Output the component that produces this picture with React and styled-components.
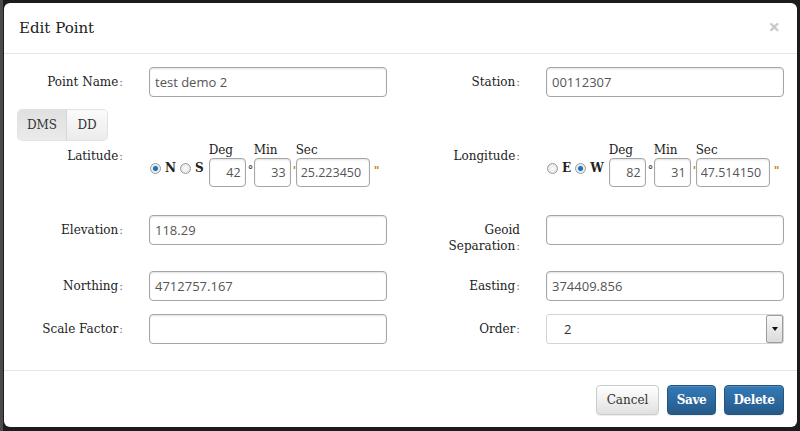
import React from 'react'
import styled, { createGlobalStyle } from 'styled-components'

const GlobalStyle = createGlobalStyle`
  html, body {
    margin: 0;
    padding: 0;
    background: #1c1c1c;
  }
  * { box-sizing: border-box; }
`

const serif = `"DejaVu Serif", "Liberation Serif", serif`
const sans = `"Open Sans", "Noto Sans", sans-serif`

const Backdrop = styled.div`
  width: 800px;
  height: 431px;
  padding: 3px 3px 0 4px;
  background: linear-gradient(90deg, #4a4a4a 0, #4a4a4a 3px, #1c1c1c 3px);
  overflow: hidden;
`

const Modal = styled.div`
  background: #fff;
  border-radius: 6px;
  height: 424px;
  display: flex;
  flex-direction: column;
  font-family: ${serif};
  color: #333;
`

const Header = styled.div`
  flex-shrink: 0;
  display: flex;
  align-items: center;
  justify-content: space-between;
  height: 51px;
  padding: 0 17px 0 15px;
  border-bottom: 1px solid #e5e5e5;
`

const Title = styled.h4`
  margin: 0;
  font-size: 15px;
  font-weight: normal;
  line-height: 20px;
  color: #222;
`

const Close = styled.span`
  font-family: ${sans};
  font-size: 20px;
  font-weight: bold;
  color: #c8c8c8;
  line-height: 1;
  margin-top: -3px;
`

const Body = styled.div`
  flex-shrink: 0;
  padding: 13px 13px 26px 15px;
`

const Row = styled.div`
  display: grid;
  grid-template-columns: 1fr 1fr;
  column-gap: 29px;
  margin-bottom: ${p => p.$gap || 0}px;
`

const Field = styled.div`
  display: flex;
  align-items: flex-start;
  gap: 26px;
`

const Label = styled.label`
  flex: 0 0 104px;
  text-align: right;
  padding-top: 7px;
  font-size: 12px;
  line-height: 16px;
  color: #222;
`

const Line = styled.span`
  display: block;
`

const Colon = styled.span`
  margin-left: 1px;
  color: #777;
  font-size: 11px;
`

const Input = styled.input`
  flex: 1;
  min-width: 0;
  height: 30px;
  border: 1px solid #a6a6a6;
  border-radius: 4px;
  box-shadow: inset 0 1px 2px rgba(0, 0, 0, 0.12);
  padding: 0 5px;
  font-family: ${sans};
  font-size: 13px;
  color: #555;
  background: #fff;
  text-align: ${p => (p.$right ? 'right' : 'left')};
  outline: none;
`

const ToggleGroup = styled.div`
  display: inline-flex;
  margin-left: -1px;
  margin-bottom: 1px;
  border-radius: 4px;
  overflow: hidden;
  box-shadow: 0 0 0 1px #e2e2e2;
`

const Toggle = styled.button`
  height: 30px;
  width: ${p => p.$w}px;
  padding: 0;
  border: none;
  border-right: ${p => (p.$active ? '1px solid #d6d6d6' : 'none')};
  background: ${p =>
    p.$active ? 'linear-gradient(#e0e0e0, #eaeaea)' : 'linear-gradient(#fbfbfb, #ececec)'};
  font-family: ${serif};
  font-size: 12px;
  color: #333;
`

const Coord = styled.div`
  display: flex;
  align-items: flex-end;
  padding-top: 1px;
`

const RadioGroup = styled.div`
  display: flex;
  align-items: center;
  gap: 4px;
  margin: 0 5px 12px 1px;
`

const RadioItem = styled.span`
  display: inline-flex;
  align-items: center;
  gap: 4px;
  font-size: 12px;
  font-weight: bold;
  color: #222;
`

const Radio = styled.span`
  width: 11px;
  height: 11px;
  border-radius: 50%;
  border: 1px solid #9a9a9a;
  background: ${p =>
    p.$checked
      ? 'radial-gradient(circle, #1f6fb5 0, #1f6fb5 2px, #dfe9f3 3px, #f2f2f2 5px)'
      : 'radial-gradient(circle, #fdfdfd 0, #e3e3e3 5px)'};
`

const Part = styled.div`
  display: flex;
  flex-direction: column;
`

const PartHead = styled.span`
  font-size: 12px;
  line-height: 16px;
  color: #222;
`

const PartBox = styled.div`
  display: flex;
  align-items: flex-start;
`

const Unit = styled.span`
  width: ${p => p.$w}px;
  padding-top: 6px;
  padding-left: ${p => p.$pl || 2}px;
  font-size: 11px;
  font-weight: bold;
  color: ${p => p.$c || '#444'};
`

const SmallInput = styled(Input)`
  flex: none;
  width: ${p => p.$w}px;
  height: 29px;
  padding: 0 4px;
  font-size: 12.5px;
`

const SelectBox = styled.div`
  flex: 1;
  display: flex;
  height: 30px;
  border: 1px solid #d4d4d4;
  border-radius: 3px;
  font-family: ${sans};
  font-size: 13px;
  color: #333;
`

const SelectValue = styled.span`
  flex: 1;
  padding: 5px 0 0 17px;
`

const SelectArrow = styled.span`
  width: 17px;
  border: 1px solid #9c9c9c;
  border-radius: 2px;
  background: linear-gradient(#f8f8f8, #dadada);
  display: flex;
  align-items: center;
  justify-content: center;
  &::after {
    content: '';
    border-left: 3px solid transparent;
    border-right: 3px solid transparent;
    border-top: 4px solid #111;
  }
`

const Footer = styled.div`
  flex-shrink: 0;
  display: flex;
  justify-content: flex-end;
  gap: 8px;
  padding: 14px 13px 12px 15px;
  border-top: 1px solid #e5e5e5;
`

const Button = styled.button`
  height: 30px;
  width: ${p => p.$w}px;
  padding: 0;
  border-radius: 4px;
  font-family: ${serif};
  font-size: 12px;
  letter-spacing: ${p => (p.$primary ? '-0.4px' : '0')};
  border: 1px solid ${p => (p.$primary ? '#245580' : '#cccccc')};
  background: ${p =>
    p.$primary ? 'linear-gradient(#337ab7, #265a88)' : 'linear-gradient(#ffffff, #e0e0e0)'};
  color: ${p => (p.$primary ? '#fff' : '#333')};
  font-weight: ${p => (p.$primary ? 'bold' : 'normal')};
  box-shadow: inset 0 1px 0 rgba(255, 255, 255, 0.15), 0 1px 1px rgba(0, 0, 0, 0.075);
`

const TextField = ({ label, value }) => (
  <Field>
    <Label>
      {label}
      <Colon>:</Colon>
    </Label>
    <Input defaultValue={value} />
  </Field>
)

const CoordField = ({ label, dirs, checked, deg, min, sec }) => (
  <Field>
    <Label>
      {label}
      <Colon>:</Colon>
    </Label>
    <Coord>
      <RadioGroup>
        {dirs.map(d => (
          <RadioItem key={d}>
            <Radio $checked={d === checked} />
            {d}
          </RadioItem>
        ))}
      </RadioGroup>
      <Part>
        <PartHead>Deg</PartHead>
        <PartBox>
          <SmallInput $w={37} $right defaultValue={deg} />
          <Unit $w={8}>°</Unit>
        </PartBox>
      </Part>
      <Part>
        <PartHead>Min</PartHead>
        <PartBox>
          <SmallInput $w={37} $right defaultValue={min} />
          <Unit $w={5} $c='#b8860b'>'</Unit>
        </PartBox>
      </Part>
      <Part>
        <PartHead>Sec</PartHead>
        <PartBox>
          <SmallInput $w={74} defaultValue={sec} />
          <Unit $w={10} $pl={4} $c='#b8860b'>"</Unit>
        </PartBox>
      </Part>
    </Coord>
  </Field>
)

const App = () => (
  <>
    <GlobalStyle />
    <Backdrop>
      <Modal>
        <Header>
          <Title>Edit Point</Title>
          <Close>×</Close>
        </Header>
        <Body>
          <Row $gap={13}>
            <TextField label='Point Name' value='test demo 2' />
            <TextField label='Station' value='00112307' />
          </Row>
          <ToggleGroup>
            <Toggle $active $w={49}>DMS</Toggle>
            <Toggle $w={40}>DD</Toggle>
          </ToggleGroup>
          <Row $gap={28}>
            <CoordField label='Latitude' dirs={['N', 'S']} checked='N' deg='42' min='33' sec='25.223450' />
            <CoordField label='Longitude' dirs={['E', 'W']} checked='W' deg='82' min='31' sec='47.514150' />
          </Row>
          <Row $gap={16}>
            <TextField label='Elevation' value='118.29' />
            <Field>
              <Label>
                <Line>Geoid</Line>
                <Line>
                  Separation<Colon>:</Colon>
                </Line>
              </Label>
              <Input />
            </Field>
          </Row>
          <Row $gap={13}>
            <TextField label='Northing' value='4712757.167' />
            <TextField label='Easting' value='374409.856' />
          </Row>
          <Row>
            <TextField label='Scale Factor' value='' />
            <Field>
              <Label>
                Order<Colon>:</Colon>
              </Label>
              <SelectBox>
                <SelectValue>2</SelectValue>
                <SelectArrow />
              </SelectBox>
            </Field>
          </Row>
        </Body>
        <Footer>
          <Button $w={63}>Cancel</Button>
          <Button $primary $w={49}>Save</Button>
          <Button $primary $w={60}>Delete</Button>
        </Footer>
      </Modal>
    </Backdrop>
  </>
)

export default App
